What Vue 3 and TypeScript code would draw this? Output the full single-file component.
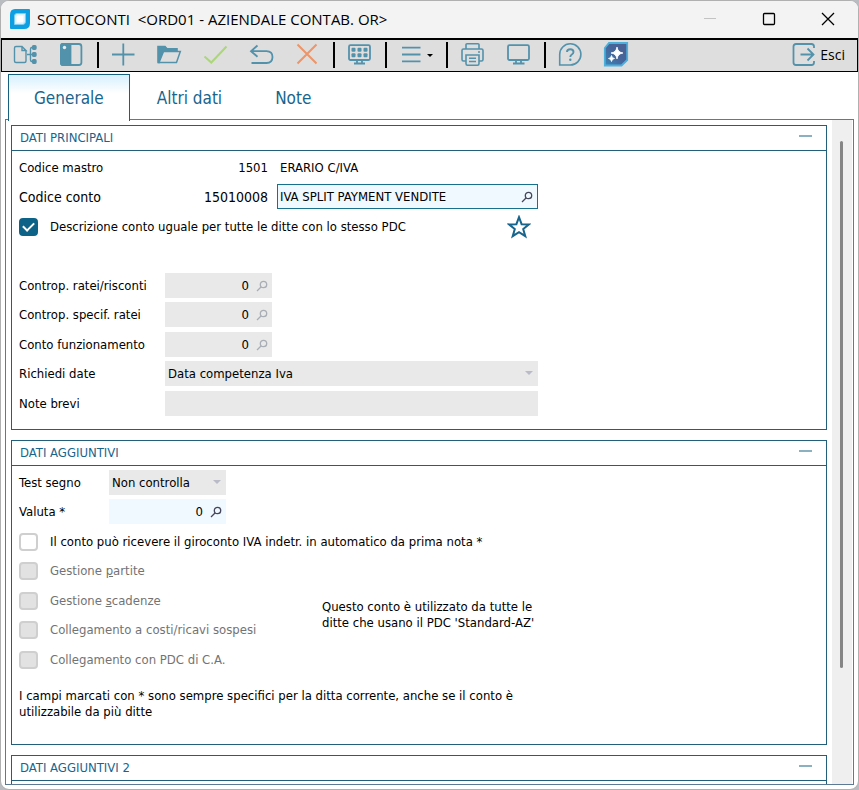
<script setup lang="ts">
import { reactive, ref } from 'vue'

interface Lookup {
  id: string
  label: string
  value: string
}

interface Flag {
  id: string
  before: string
  key: string
  after: string
}

const tabs: string[] = ['Generale', 'Altri dati', 'Note']
const activeTab = ref<string>('Generale')

const account = reactive({
  description: 'IVA SPLIT PAYMENT VENDITE',
  shared: true,
  dates: 'Data competenza Iva',
  notes: '',
  signTest: 'Non controlla',
  currency: '0',
  vatTransfer: false,
})

const lookups = reactive<Lookup[]>([
  { id: 'ratei', label: 'Controp. ratei/risconti', value: '0' },
  { id: 'specifica', label: 'Controp. specif. ratei', value: '0' },
  { id: 'funzionamento', label: 'Conto funzionamento', value: '0' },
])

const flags: Flag[] = [
  { id: 'partite', before: 'Gestione ', key: 'p', after: 'artite' },
  { id: 'scadenze', before: 'Gestione ', key: 's', after: 'cadenze' },
  { id: 'sospesi', before: 'Collegamento a costi/ricavi sospesi', key: '', after: '' },
  { id: 'pdc', before: 'Collegamento con PDC di C.A.', key: '', after: '' },
]
</script>

<template>
  <div class="window">
    <header class="titlebar">
      <svg class="app-icon" viewBox="0 0 20 20" aria-hidden="true">
        <path d="M5 0H19Q20 0 20 1V14Q20 20 14 20H1Q0 20 0 19V6Q0 0 5 0Z" fill="#0c9fe2" />
        <path d="M7 4.500H15.500V12.500Q15.500 15.500 12.500 15.500H4.500V7Q4.500 4.500 7 4.500Z" fill="#d9f1fc" stroke="#7fcdf0" />
        <path d="M8 6.500H13.500V12Q13.500 13.500 12 13.500H6.500V8Q6.500 6.500 8 6.500Z" fill="#fff" />
      </svg>
      <h1>SOTTOCONTI&nbsp; &lt;ORD01 - AZIENDALE CONTAB. OR&gt;</h1>
      <div class="window-buttons">
        <button type="button" aria-label="Riduci a icona" disabled>
          <svg viewBox="0 0 14 14"><path d="M1 6.500H13" stroke="#c3c3c3" /></svg>
        </button>
        <button type="button" aria-label="Ingrandisci">
          <svg viewBox="0 0 14 14"><rect x="1.500" y="1.500" width="11" height="11" rx="1" stroke="#000" stroke-width="1.300" /></svg>
        </button>
        <button type="button" aria-label="Chiudi">
          <svg viewBox="0 0 14 14"><path d="M1 1L13 13M13 1L1 13" stroke="#000" stroke-width="1.300" /></svg>
        </button>
      </div>
    </header>

    <nav class="toolbar" aria-label="Comandi">
      <button type="button" aria-label="Struttura">
        <svg viewBox="0 0 26 26" stroke-width="1.400">
          <path d="M14 9V19Q14 20.500 12.500 20.500H4Q2.500 20.500 2.500 19V6Q2.500 4.500 4 4.500H10L14 8.500H10V4.500" />
          <path d="M15 12.500H22M22 5.500H20Q18.500 5.500 18.500 7V18Q18.500 19.500 20 19.500H22" />
          <rect x="20.500" y="3.800" width="3.500" height="3.500" rx="1" class="solid" />
          <rect x="20.500" y="10.800" width="3.500" height="3.500" rx="1" class="solid" />
          <rect x="20.500" y="17.800" width="3.500" height="3.500" rx="1" class="solid" />
        </svg>
      </button>
      <button type="button" aria-label="Pannello laterale">
        <svg viewBox="0 0 26 26" stroke-width="1.800">
          <rect x="2.900" y="2" width="20.500" height="21" rx="2.500" />
          <path d="M4.500 2H12.500V23H4.500Q3 23 3 21V4Q3 2 4.500 2Z" class="solid" />
          <circle cx="6.500" cy="5.500" r="1.700" fill="#e4eef2" stroke="none" />
        </svg>
      </button>
      <span class="separator"></span>
      <button type="button" aria-label="Nuovo">
        <svg viewBox="0 0 26 26" stroke-width="1.800"><path d="M2 12.500H24.500M13.300 1.500V23.500" /></svg>
      </button>
      <button type="button" aria-label="Apri">
        <svg viewBox="0 0 26 26" stroke-width="1.500">
          <path d="M2 4.500H9L11 6.700H21V9.500H8L3.500 20.500H2Z" class="solid" />
          <path d="M7.500 9.500H24.300L20.500 20.500H3Z" fill="#dedede" />
          <path d="M2.500 20V5H8.800L11 7.200H20.500V9.500" />
        </svg>
      </button>
      <button type="button" class="confirm" aria-label="Conferma">
        <svg viewBox="0 0 26 26" stroke-width="2"><path d="M2.500 14.500L9.300 20.500L24.500 4.500" /></svg>
      </button>
      <button type="button" aria-label="Annulla modifica">
        <svg viewBox="0 0 26 26" stroke-width="1.800"><path d="M9.500 3.500L3 9.200L9.500 14.800M3.200 9.200H18.500Q24.500 9.500 24.500 15Q24.500 21 18.500 21H3.500" /></svg>
      </button>
      <button type="button" class="cancel" aria-label="Elimina">
        <svg viewBox="0 0 26 26" stroke-width="2"><path d="M3.500 2.500L22.500 21.500M22.500 2.500L3.500 21.500" /></svg>
      </button>
      <span class="separator"></span>
      <button type="button" aria-label="Griglia">
        <svg viewBox="0 0 26 26" stroke-width="1.800">
          <rect x="3" y="3.200" width="21" height="14.800" rx="1.500" />
          <g class="dots">
            <rect x="5.500" y="5.800" width="4" height="4" rx="1" /><rect x="11.500" y="5.800" width="4" height="4" rx="1" /><rect x="17.500" y="5.800" width="4" height="4" rx="1" />
            <rect x="5.500" y="11.300" width="4" height="4" rx="1" /><rect x="11.500" y="11.300" width="4" height="4" rx="1" /><rect x="17.500" y="11.300" width="4" height="4" rx="1" />
          </g>
          <path d="M11 18V21M16 18V21M8 21.500H19" />
        </svg>
      </button>
      <span class="separator"></span>
      <button type="button" class="menu" aria-label="Menu">
        <svg viewBox="0 0 26 26" stroke-width="1.800"><path d="M4 5.700H22.500M4 12.500H22.500M4 19.300H22.500" /></svg>
        <svg class="caret" viewBox="0 0 6 3"><path d="M0 0H6L3 3Z" /></svg>
      </button>
      <span class="separator"></span>
      <button type="button" aria-label="Stampa">
        <svg viewBox="0 0 26 26" stroke-width="1.600">
          <path d="M7 7V2.500Q7 1.800 8 1.800H19Q20 1.800 20 2.500V7" />
          <path d="M7 19H4.500Q3 19 3 17.500V8.500Q3 7 4.500 7H22.500Q24 7 24 8.500V17.500Q24 19 22.500 19H20" />
          <path d="M7 13H20V21.500Q20 23.200 18.500 23.200H8.500Q7 23.200 7 21.500ZM10 16.300H17M10 19.500H17" />
          <circle cx="20" cy="10" r="1" class="solid" stroke="none" />
        </svg>
      </button>
      <button type="button" aria-label="Anteprima a video">
        <svg viewBox="0 0 26 26" stroke-width="1.800">
          <rect x="3" y="3.200" width="21" height="14.800" rx="1.500" />
          <path d="M11 18V21M16 18V21M8 21.500H19.500" />
        </svg>
      </button>
      <span class="separator"></span>
      <button type="button" aria-label="Guida">
        <svg viewBox="0 0 26 26" stroke-width="1.600">
          <path d="M2.700 23V12.500A10.600 10.600 0 1 1 13.300 23Z" />
          <path d="M10 10Q10 7.200 13.300 7.200Q16.500 7.200 16.500 10Q16.500 11.500 14.800 12.500Q13.300 13.400 13.300 15" stroke-width="1.900" />
          <circle cx="13.300" cy="17.800" r="1.200" class="solid" stroke="none" />
        </svg>
      </button>
      <button type="button" aria-label="Assistente">
        <svg viewBox="0 0 26 26" stroke="none">
          <defs>
            <linearGradient id="assistant-fill" x1="0" y1="1" x2="1" y2="0">
              <stop offset="0" stop-color="#3a86b8" /><stop offset="0.500" stop-color="#46659b" /><stop offset="1" stop-color="#4c5f91" />
            </linearGradient>
          </defs>
          <path d="M6 1H24.200V18L18.500 23.500H1.800V6Z" fill="url(#assistant-fill)" class="badge" />
          <path d="M14 5Q14.800 10.300 20 11Q14.800 11.700 14 17Q13.200 11.700 8 11Q13.200 10.300 14 5Z" class="spark" />
          <path d="M8.500 13.500Q8.900 16.200 11.500 16.500Q8.900 16.800 8.500 19.500Q8.100 16.800 5.500 16.500Q8.100 16.200 8.500 13.500Z" class="spark" />
        </svg>
      </button>
      <button type="button" class="exit">
        <svg viewBox="0 0 26 26" stroke-width="1.800">
          <path d="M23 6V4.500Q23 2 20.500 2H5Q2.500 2 2.500 4.500V20.500Q2.500 23 5 23H20.500Q23 23 23 20.500V19" />
          <path d="M9.500 12.500H22.500M16.500 6.500L22.500 12.500L16.500 18.500" />
        </svg>
        <span>Esci</span>
      </button>
    </nav>

    <div class="tabs" role="tablist">
      <button
        v-for="tab in tabs"
        :key="tab"
        type="button"
        role="tab"
        :class="{ active: tab === activeTab }"
        :aria-selected="tab === activeTab"
        @click="activeTab = tab"
      >{{ tab }}</button>
    </div>

    <main class="panel">
      <div class="sections">
        <section class="card">
          <header>
            <h2>DATI PRINCIPALI</h2>
            <button type="button" class="collapse" aria-label="Comprimi Dati principali"></button>
          </header>
          <div class="rows">
            <div class="row">
              <span class="label">Codice mastro</span>
              <output class="code">1501</output>
              <span class="master">ERARIO C/IVA</span>
            </div>
            <div class="row large">
              <label class="label" for="description">Codice conto</label>
              <output class="code">15010008</output>
              <div class="field focused">
                <input id="description" v-model="account.description" type="text" />
                <svg class="lens" viewBox="0 0 12 12"><circle cx="7.500" cy="4.500" r="3.200" /><path d="M5 7L1 11" /></svg>
              </div>
            </div>
            <div class="row">
              <label class="check"><input v-model="account.shared" type="checkbox" />Descrizione conto uguale per tutte le ditte con lo stesso PDC</label>
              <button type="button" class="star" aria-label="Preferito">
                <svg viewBox="0 0 24 24"><path d="M12 2.200L14.600 9.200L22 9.400L16.200 14L18.300 21.200L12 17.100L5.700 21.200L7.800 14L2 9.400L9.400 9.200Z" /></svg>
              </button>
            </div>
            <div class="row"></div>
            <div v-for="item in lookups" :key="item.id" class="row">
              <label class="label" :for="item.id">{{ item.label }}</label>
              <div class="field number disabled">
                <input :id="item.id" v-model="item.value" type="text" disabled />
                <svg class="lens" viewBox="0 0 12 12"><circle cx="7.500" cy="4.500" r="3.200" /><path d="M5 7L1 11" /></svg>
              </div>
            </div>
            <div class="row">
              <label class="label" for="dates">Richiedi date</label>
              <div class="field disabled">
                <select id="dates" v-model="account.dates" disabled><option>Data competenza Iva</option></select>
                <svg class="arrow" viewBox="0 0 8 4"><path d="M0 0H8L4 4Z" /></svg>
              </div>
            </div>
            <div class="row">
              <label class="label" for="notes">Note brevi</label>
              <div class="field disabled"><input id="notes" v-model="account.notes" type="text" disabled /></div>
            </div>
          </div>
        </section>

        <section class="card extra">
          <header>
            <h2>DATI AGGIUNTIVI</h2>
            <button type="button" class="collapse" aria-label="Comprimi Dati aggiuntivi"></button>
          </header>
          <div class="rows">
            <div class="row">
              <label class="label" for="sign">Test segno</label>
              <div class="field short disabled">
                <select id="sign" v-model="account.signTest" disabled><option>Non controlla</option></select>
                <svg class="arrow" viewBox="0 0 8 4"><path d="M0 0H8L4 4Z" /></svg>
              </div>
            </div>
            <div class="row">
              <label class="label" for="currency">Valuta *</label>
              <div class="field number short">
                <input id="currency" v-model="account.currency" type="text" />
                <svg class="lens" viewBox="0 0 12 12"><circle cx="7.500" cy="4.500" r="3.200" /><path d="M5 7L1 11" /></svg>
              </div>
            </div>
            <div class="row">
              <label class="check"><input v-model="account.vatTransfer" type="checkbox" />Il conto può ricevere il giroconto IVA indetr. in automatico da prima nota *</label>
            </div>
            <div class="flags">
              <label v-for="flag in flags" :key="flag.id" class="check"><input type="checkbox" disabled /><span>{{ flag.before }}<u v-if="flag.key">{{ flag.key }}</u>{{ flag.after }}</span></label>
            </div>
            <p class="usage">Questo conto è utilizzato da tutte le ditte che usano il PDC 'Standard-AZ'</p>
          </div>
          <p class="hint">I campi marcati con * sono sempre specifici per la ditta corrente, anche se il conto è utilizzabile da più ditte</p>
        </section>

        <section class="card">
          <header>
            <h2>DATI AGGIUNTIVI 2</h2>
            <button type="button" class="collapse" aria-label="Comprimi Dati aggiuntivi 2"></button>
          </header>
          <div class="rows"></div>
        </section>
      </div>
      <div class="scrollbar"><div class="thumb"></div></div>
    </main>
  </div>
</template>

<style>
body {
  background: #b9bcc0;
}
</style>

<style scoped>
* {
  box-sizing: border-box;
}

.window {
  display: flex;
  flex-direction: column;
  height: 100vh;
  padding-bottom: 4px;
  overflow: hidden;
  border: 1px solid #b0b0b0;
  border-radius: 9px;
  background: #fff;
  color: #000;
  font: 13px/16px "DejaVu Sans Condensed", "DejaVu Sans", sans-serif;
}

button,
input,
select {
  margin: 0;
  padding: 0;
  border: 0;
  background: none;
  color: inherit;
  font: inherit;
}

h1,
h2,
p {
  margin: 0;
  font-weight: 400;
}

svg {
  display: block;
  fill: none;
}

.titlebar {
  display: flex;
  flex: none;
  align-items: center;
  height: 37px;
  padding: 0 1px 2px 9px;
  background: #f3f3f3;
}

.app-icon {
  width: 20px;
  height: 20px;
}

h1 {
  margin-left: 7px;
  font: 15px/20px "Open Sans", sans-serif;
}

.window-buttons {
  display: flex;
  margin-left: auto;
}

.window-buttons button {
  display: grid;
  place-items: center;
  width: 59px;
  height: 34px;
}

.window-buttons svg {
  width: 14px;
  height: 14px;
}

.toolbar {
  display: flex;
  flex: none;
  height: 34px;
  border: solid #000;
  border-width: 2px 1px 1px;
  background: #dedede;
}

.toolbar button {
  display: grid;
  place-items: center;
  width: 46px;
  height: 30px;
}

.toolbar svg {
  width: 26px;
  height: 26px;
  stroke: #5392ab;
}

.toolbar .solid,
.dots {
  fill: #5392ab;
}

.dots {
  stroke: none;
}

.badge {
  stroke: #4bb0dc;
  stroke-width: 1.8px;
}

.spark {
  fill: #fff;
  stroke: #fff;
  stroke-width: 0.8px;
}

.toolbar .confirm svg {
  stroke: #abd67a;
}

.toolbar .cancel svg {
  stroke: #ed9468;
}

.toolbar .menu {
  display: flex;
  align-items: center;
  gap: 3px;
  width: 55px;
  padding-left: 10px;
}

.toolbar .caret {
  width: 6px;
  height: 3px;
  fill: #000;
  stroke: none;
}

.separator {
  width: 6px;
  padding: 2px 1px 2px 3px;
}

.separator::before {
  display: block;
  height: 26px;
  background: #000;
  content: "";
}

.toolbar .exit {
  display: flex;
  align-items: center;
  gap: 3px;
  width: auto;
  margin-left: auto;
  padding-right: 12px;
  font: 14px/20px "Open Sans", sans-serif;
}

.tabs {
  display: flex;
  flex: none;
  gap: 1px;
  height: 48px;
  padding: 2px 7px 0;
}

.tabs button {
  position: relative;
  height: 47px;
  padding: 0 25px;
  border: 1px solid transparent;
  color: #17658d;
  font: 17px/44px "DejaVu Sans Condensed", "DejaVu Sans", sans-serif;
}

.tabs .active {
  z-index: 1;
  border-color: #17607f;
  border-bottom: 0;
  background: linear-gradient(#d6f0ff, #fff 40%);
  line-height: 42px;
}

.panel {
  display: flex;
  flex: 1;
  min-height: 0;
  margin: -1px 4px 0;
  padding-right: 1px;
  border: 1px solid #5c7a93;
}

.sections {
  display: flex;
  flex: 1;
  flex-direction: column;
  gap: 10px;
  overflow: hidden;
  padding: 5px 5px 0;
}

.card {
  flex: none;
  border: 1px solid #235f7a;
}

.card header {
  display: flex;
  align-items: center;
  justify-content: space-between;
  height: 25px;
  padding: 0 14px 0 8px;
  border-bottom: 1px solid #235f7a;
  color: #17658d;
}

h2 {
  font-size: 13px;
}

.collapse {
  width: 13px;
  height: 22px;
  padding: 8px 0 12px;
  background: #8ab0c2 content-box;
}

.rows {
  display: grid;
  grid-template-columns: minmax(0, 303px) minmax(0, 216px);
  grid-auto-rows: 29px 30px;
  padding: 4px 7px 9px;
}

.row {
  display: flex;
  grid-column: 1 / -1;
  align-items: center;
  height: 25px;
}

.label {
  flex: none;
  width: 146px;
}

.code {
  flex: none;
  width: 103px;
  text-align: right;
}

.master {
  margin-left: 12px;
}

.large .label,
.large .code {
  font-size: 14px;
}

.field {
  position: relative;
  display: flex;
  flex: 1;
  align-items: center;
  height: 25px;
  padding: 0 3px;
  background: #f0f9ff;
}

.field input,
.field select {
  flex: 1;
  width: 100%;
  min-width: 0;
  height: 23px;
  outline: 0;
  appearance: none;
  opacity: 1;
}

.focused {
  margin-left: 9px;
  padding: 0 3px 0 2px;
  border: 1px solid #17708c;
}

.number {
  flex: none;
  width: 107px;
}

.number input {
  text-align: right;
}

.short {
  flex: none;
  width: 117px;
}

.disabled {
  background: #e9e9e9;
}

.lens {
  flex: none;
  width: 12px;
  height: 12px;
  margin: 0 1px 0 7px;
  stroke: #46465a;
  stroke-width: 1.3px;
}

.disabled .lens {
  stroke: #a9adb5;
}

.arrow {
  position: absolute;
  top: 10px;
  right: 5px;
  width: 8px;
  height: 4px;
  fill: #b9bcc8;
  pointer-events: none;
}

.check {
  display: flex;
  align-items: center;
  gap: 12px;
  height: 25px;
  white-space: nowrap;
}

.check input {
  display: grid;
  flex: none;
  place-items: center;
  width: 19px;
  height: 18px;
  border: 2px solid #cfcfcf;
  border-radius: 4px;
  background: #fff;
  appearance: none;
}

.check input:checked {
  border-color: #0c6387;
  background: #0c6387;
}

.check input:checked::before {
  width: 9px;
  height: 5px;
  margin-top: -3px;
  border: solid #fff;
  border-width: 0 0 2px 2px;
  transform: rotate(-45deg);
  content: "";
}

.check input:disabled {
  background: #e2e2e2;
}

.star {
  width: 24px;
  height: 24px;
  margin-right: 7px;
  margin-left: auto;
}

.star path {
  stroke: #17658d;
  stroke-width: 2px;
}

.extra .label {
  width: 90px;
}

.flags {
  display: grid;
  grid-row: 4 / span 4;
  grid-auto-rows: 30px 29px;
  color: #737373;
}

.usage {
  grid-row: 4 / span 4;
  align-self: center;
  margin-bottom: 4px;
}

.hint {
  max-width: 519px;
  padding: 3px 7px 24px;
}

.scrollbar {
  flex: none;
  width: 20px;
  padding: 21px 9px 0 8px;
  background: #efefef;
}

.thumb {
  height: 82%;
  border-radius: 2px;
  background: #858585;
}
</style>
